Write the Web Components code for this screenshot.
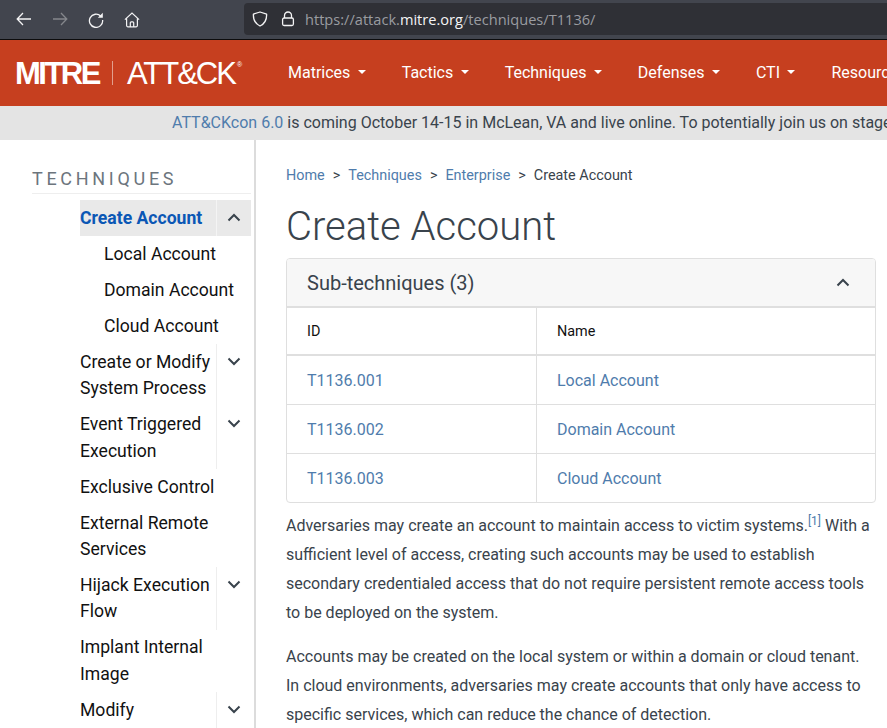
<!DOCTYPE html>
<html lang="en">
<head>
<meta charset="utf-8">
<title>Create Account</title>
<style>
  html, body { margin: 0; height: 100%; overflow: hidden; background: #fff; }
  body { width: 887px; height: 728px; font-family: Roboto, "Liberation Sans", sans-serif; display: flex; flex-direction: column; }
</style>
</head>
<body>
<browser-bar></browser-bar>
<site-nav></site-nav>
<site-banner></site-banner>
<page-layout>
  <side-nav slot="side"></side-nav>
  <tech-content slot="main"></tech-content>
</page-layout>

<script>
const CHEV_UP = `<svg width="14" height="9" viewBox="0 0 14 9"><path d="M1.5 7.5 7 2l5.5 5.5" fill="none" stroke="currentColor" stroke-width="2"/></svg>`;
const CHEV_DOWN = `<svg width="14" height="9" viewBox="0 0 14 9"><path d="M1.5 1.5 7 7l5.5-5.5" fill="none" stroke="currentColor" stroke-width="2"/></svg>`;

class BrowserBar extends HTMLElement {
  constructor() {
    super();
    this.attachShadow({ mode: "open" });
    this.shadowRoot.innerHTML = `
      <style>
        :host { display: flex; align-items: center; flex: none; height: 39px; background: #42454e; border-bottom: 1px solid #0c0c0d; color: #f4f4f5; }
        .btn { flex: none; width: 36px; display: flex; justify-content: center; }
        .btns { display: flex; width: 244px; padding-left: 6px; box-sizing: border-box; }
        .btns .btn:nth-child(3) { width: 35px; }
        .btns .btn:nth-child(4) { width: 37px; }
        .url { flex: 1; align-self: flex-start; height: 32px; margin-top: 3px; background: #2f3036; border-radius: 4px 0 0 4px; display: flex; align-items: center; font: 14.6px "Open Sans", Roboto, sans-serif; color: #9a9ca1; white-space: nowrap; }
        .url svg { flex: none; }
        .shield { margin-left: 8px; }
        .lock { margin-left: 13px; margin-right: 10px; }
        b { font-weight: 400; color: #f4f4f5; }
      </style>
      <div class="btns">
        <div class="btn"><svg width="16" height="14" viewBox="0 0 16 14"><path d="M15 7H1.500M7 1 1.200 7 7 13" fill="none" stroke="currentColor" stroke-width="1.300"/></svg></div>
        <div class="btn"><svg width="16" height="14" viewBox="0 0 16 14"><path d="M1 7h13.500M9 1l5.800 6L9 13" fill="none" stroke="#85878c" stroke-width="1.300"/></svg></div>
        <div class="btn"><svg width="16" height="16" viewBox="0 0 16 16"><path d="M12.800 4.200A6.600 6.600 0 1 0 14.600 8" fill="none" stroke="currentColor" stroke-width="1.300"/><path d="M14.800 .8v5h-5z" fill="currentColor"/></svg></div>
        <div class="btn"><svg width="16" height="16" viewBox="0 0 16 16"><path d="M.9 7.600 8 1l7.100 6.600M2.600 6.400v7.200q0 1.200 1.200 1.200h8.400q1.200 0 1.200-1.200V6.400M6.300 14.800v-4q0-1 1-1h1.400q1 0 1 1v4" fill="none" stroke="currentColor" stroke-width="1.200"/></svg></div>
      </div>
      <div class="url">
        <svg class="shield" width="16" height="16" viewBox="0 0 16 16"><path d="M8 1 14.600 3.100c.3 5.500-1.600 9.500-6.600 11.900C3 12.600 1.100 8.600 1.400 3.100z" fill="none" stroke="#f4f4f5" stroke-width="1.300" stroke-linejoin="round"/></svg>
        <svg class="lock" width="14" height="16" viewBox="0 0 14 16"><path d="M3.500 7V4.500a3.500 3.500 0 0 1 7 0V7" fill="none" stroke="#f4f4f5" stroke-width="1.300"/><rect x="1.600" y="7" width="10.800" height="7.500" rx="1.500" fill="none" stroke="#f4f4f5" stroke-width="1.300"/></svg>
        <span>https://attack.<b>mitre.org</b>/techniques/T1136/</span>
      </div>`;
  }
}

class SiteNav extends HTMLElement {
  constructor() {
    super();
    this.attachShadow({ mode: "open" });
    const items = [["Matrices", 1], ["Tactics", 1], ["Techniques", 1], ["Defenses", 1], ["CTI", 1], ["Resources", 0]];
    this.shadowRoot.innerHTML = `
      <style>
        :host { display: flex; align-items: center; flex: none; height: 66px; background: #c63f1f; color: #fff; overflow: hidden; white-space: nowrap; }
        .logo { flex: none; width: 288px; padding-left: 15px; box-sizing: border-box; display: flex; align-items: center; font-family: "Liberation Sans", Arial, sans-serif; }
        .mitre { font-size: 31px; font-weight: 700; letter-spacing: -2.500px; line-height: 1; }
        .sep { width: 1px; height: 24px; background: #e29f8d; margin: 0 14px 0 13px; }
        .attck { font-size: 31px; font-weight: 400; letter-spacing: -2px; line-height: 1; }
        sup { font-size: 7px; align-self: flex-start; margin: 3px 0 0 2px; line-height: 1; }
        .logo-wrap { display: flex; align-items: center; height: 30px; }
        nav { display: flex; gap: 36px; font-size: 16px; padding-bottom: 2px; }
        a { display: flex; align-items: center; color: #fff; text-decoration: none; }
        i { width: 0; height: 0; margin-left: 7.400px; border: 4.800px solid transparent; border-top-color: #fff; border-bottom: 0; }
      </style>
      <div class="logo"><div class="logo-wrap"><span class="mitre">MITRE</span><span class="sep"></span><span class="attck">ATT&amp;CK</span><sup>®</sup></div></div>
      <nav>${items.map(([t, c]) => `<a>${t}${c ? "<i></i>" : ""}</a>`).join("")}</nav>`;
  }
}

class SiteBanner extends HTMLElement {
  constructor() {
    super();
    this.attachShadow({ mode: "open" });
    this.shadowRoot.innerHTML = `
      <style>
        :host { display: block; flex: none; height: 34px; line-height: 34px; background: #e4e4e4; color: #39434c; font-size: 16px; white-space: nowrap; overflow: hidden; padding-left: 172px; box-sizing: border-box; }
        a { color: #4f7cac; }
      </style>
      <a>ATT&amp;CKcon 6.0</a> is coming October 14-15 in McLean, VA and live online. To potentially join us on stage, submit to the CFP`;
  }
}

class PageLayout extends HTMLElement {
  constructor() {
    super();
    this.attachShadow({ mode: "open" });
    this.shadowRoot.innerHTML = `
      <style>
        :host { display: flex; flex: 1; min-height: 0; overflow: hidden; }
        .side { flex: none; width: 256px; box-sizing: border-box; border-right: 2px solid #dcdcdc; overflow: hidden; }
        .main { flex: 1; min-width: 0; }
      </style>
      <div class="side"><slot name="side"></slot></div>
      <div class="main"><slot name="main"></slot></div>`;
  }
}

class NavItem extends HTMLElement {
  connectedCallback() {
    if (this.shadowRoot) return;
    this.attachShadow({ mode: "open" });
    const state = this.getAttribute("state");
    this.shadowRoot.innerHTML = `
      <style>
        :host { display: flex; width: 171px; color: #111; font-size: 17.600px; line-height: 26.400px; }
        .label { flex: 1; padding: 4.800px 0; min-width: 0; }
        .tog { flex: none; width: 35px; display: flex; justify-content: center; padding-top: 13px; box-sizing: border-box; color: #39434c; border-left: 1px solid #eee; }
        .none { display: none; }
        :host([active]) { background: #e9e9e9; color: #0b57b5; font-weight: 700; }
        :host([active]) .tog { border-left-color: #f4f4f4; }
        :host([sub]) { padding-left: 24px; box-sizing: border-box; }
      </style>
      <div class="label"><slot></slot></div>
      <div class="tog ${state ? "" : "none"}">${state === "open" ? CHEV_UP : CHEV_DOWN}</div>`;
  }
}
customElements.define("nav-item", NavItem);

class SideNav extends HTMLElement {
  constructor() {
    super();
    this.attachShadow({ mode: "open" });
    this.shadowRoot.innerHTML = `
      <style>
        :host { display: block; padding: 26px 3px 0 32px; }
        h2 { margin: 0 0 6px; padding-bottom: 2px; font: 400 18px/25px Roboto, sans-serif; letter-spacing: 3.700px; color: #6c757d; border-bottom: 1px solid #eee; }
        .list { padding-left: 48px; }
      </style>
      <h2>TECHNIQUES</h2>
      <div class="list">
        <nav-item active state="open">Create Account</nav-item>
        <nav-item sub>Local Account</nav-item>
        <nav-item sub>Domain Account</nav-item>
        <nav-item sub>Cloud Account</nav-item>
        <nav-item state="closed">Create or Modify System Process</nav-item>
        <nav-item state="closed">Event Triggered Execution</nav-item>
        <nav-item>Exclusive Control</nav-item>
        <nav-item>External Remote Services</nav-item>
        <nav-item state="closed">Hijack Execution Flow</nav-item>
        <nav-item>Implant Internal Image</nav-item>
        <nav-item state="closed">Modify</nav-item>
      </div>`;
  }
}

class SubTable extends HTMLElement {
  constructor() {
    super();
    this.attachShadow({ mode: "open" });
    const rows = [["T1136.001", "Local Account"], ["T1136.002", "Domain Account"], ["T1136.003", "Cloud Account"]];
    this.shadowRoot.innerHTML = `
      <style>
        :host { display: block; border: 1px solid #dfdfdf; border-radius: 4px; overflow: hidden; font-size: 16px; color: #39434c; }
        .head { display: flex; align-items: center; justify-content: space-between; height: 47px; padding: 0 25px 0 20px; background: #f7f7f7; border-bottom: 2px solid #dfdfdf; font-size: 20px; }
        .head svg { display: block; color: #39434c; }
        .row { display: grid; grid-template-columns: 249px 1fr; height: 48px; border-top: 1px solid #dfdfdf; }
        .cell { display: flex; align-items: center; padding-left: 20px; }
        .cell + .cell { border-left: 1px solid #dfdfdf; }
        .th { color: #111; font-size: 14.400px; font-weight: 450; height: 46px; border-top: 0; border-bottom: 2px solid #dfdfdf; }
        .row a { color: #4f7cac; }
        .body .row:first-child { border-top: 0; }
      </style>
      <div class="head"><span>Sub-techniques (3)</span>${CHEV_UP}</div>
      <div class="row th"><div class="cell">ID</div><div class="cell">Name</div></div>
      <div class="body">${rows.map(([id, name]) => `<div class="row"><div class="cell"><a>${id}</a></div><div class="cell"><a>${name}</a></div></div>`).join("")}</div>`;
  }
}
customElements.define("sub-table", SubTable);

class TechContent extends HTMLElement {
  constructor() {
    super();
    this.attachShadow({ mode: "open" });
    this.shadowRoot.innerHTML = `
      <style>
        :host { display: block; padding: 27px 11px 0 30px; color: #39434c; font-size: 16px; }
        .crumbs { display: flex; font-size: 14.400px; line-height: 18px; color: #39434c; }
        .crumbs a { color: #4f7cac; }
        .crumbs span { margin: 0 8px; }
        h1 { margin: 18px 0 7px; font-size: 40px; font-weight: 300; line-height: 48px; color: #39434c; }
        p { margin: 0 0 15px; line-height: 29px; }
        .text { padding-top: 8px; }
        sup { color: #4f7cac; font-size: 12px; line-height: 0; }
      </style>
      <div class="crumbs"><a>Home</a><span>&gt;</span><a>Techniques</a><span>&gt;</span><a>Enterprise</a><span>&gt;</span>Create Account</div>
      <h1>Create Account</h1>
      <sub-table></sub-table>
      <div class="text">
        <p>Adversaries may create an account to maintain access to victim systems.<sup>[1]</sup> <span>With a</span> <span>sufficient level of access, creating such accounts may be used to establish secondary credentialed access that do not require persistent remote access tools to be deployed on the system.</span></p>
        <p>Accounts may be created on the local system or within a domain or cloud tenant. In cloud environments, adversaries may create accounts that only have access to specific services, which can reduce the chance of detection.</p>
      </div>`;
  }
}

customElements.define("browser-bar", BrowserBar);
customElements.define("site-nav", SiteNav);
customElements.define("site-banner", SiteBanner);
customElements.define("page-layout", PageLayout);
customElements.define("side-nav", SideNav);
customElements.define("tech-content", TechContent);
</script>
</body>
</html>
